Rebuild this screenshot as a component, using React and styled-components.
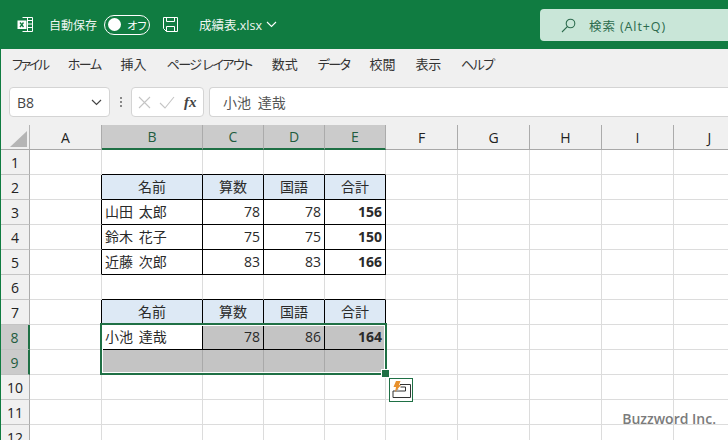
import React from 'react';
import styled, { createGlobalStyle } from 'styled-components';

const GREEN = '#107c41';
const SEL = '#1f7045';
const FONT = '"Open Sans", "Noto Sans CJK JP", sans-serif';

const Global = createGlobalStyle`
  html, body { margin: 0; padding: 0; background: #fff; }
  body { font-family: ${FONT}; }
`;

const Page = styled.div`
  width: 728px; height: 440px; overflow: hidden; position: relative;
  display: flex; flex-direction: column; background: #fff;
`;
const TitleBar = styled.header`
  height: 49px; flex: none; background: ${GREEN}; color: #fff;
  display: flex; align-items: center; font-size: 12px; padding-left: 17px;
`;
const Logo = styled.svg`width: 17px; height: 17px; margin-right: 15px; flex: none;`;
const AutoSave = styled.span`width: 48px; white-space: nowrap; color: #eef6f1;`;
const Toggle = styled.div`
  margin-left: 7px; width: 46px; height: 20px; box-sizing: border-box; border: 1px solid #fff; border-radius: 10px;
  display: flex; align-items: center; padding-left: 3px; gap: 6px; font-size: 11px; white-space: nowrap; letter-spacing: -1.5px;
`;
const Knob = styled.i`width: 13px; height: 13px; border-radius: 50%; background: #fff; flex: none;`;
const SaveIcon = styled.svg`width: 17px; height: 17px; margin-left: 12px; flex: none;`;
const FileName = styled.span`margin-left: 20px; font-size: 12.5px; display: flex; align-items: center; gap: 4px; color: #eef6f1; white-space: nowrap;`;
const SearchBox = styled.div`
  margin-left: auto; width: 188px; height: 32px; margin-top: 1px; background: #c9e6d8; border-radius: 4px 0 0 4px;
  display: flex; align-items: center; padding-left: 21px; box-sizing: border-box; color: #2c6b4d; font-size: 12.5px; gap: 13px; letter-spacing: 0.9px;
`;
const Tabs = styled.nav`
  height: 38px; flex: none; box-sizing: border-box; border-left: 1px solid ${GREEN}; background: #f0f0f0; padding: 0 0 9px 11px;
  display: flex; align-items: center; gap: 20px; font-size: 13px; color: #333; font-feature-settings: 'palt';
`;
const Tab = styled.span`
  white-space: nowrap;
  letter-spacing: ${p => p.$spacing}px;
`;
const FormulaBar = styled.div`
  height: 38px; flex: none; box-sizing: border-box; border-left: 1px solid ${GREEN}; background: #f0f0f0; padding: 0 0 8px 8px;
  display: flex; align-items: stretch;
`;
const NameBox = styled.div`
  width: 101px; box-sizing: border-box; background: #fff; border: 1px solid #d4d4d4; border-radius: 4px;
  display: flex; align-items: center; justify-content: space-between; padding: 0 7px; font-size: 14px; color: #444;
`;
const Dots = styled.div`
  width: 21px; flex: none; display: flex; flex-direction: column; align-items: center; justify-content: center; gap: 2px;
`;
const Dot = styled.i`width: 2px; height: 2px; background: #888;`;
const FnBox = styled.div`
  width: 73px; box-sizing: border-box; background: #fff; border: 1px solid #d4d4d4; border-radius: 4px;
  display: flex; align-items: center; padding-left: 6px; gap: 8px;
`;
const Fx = styled.span`font-family: "Liberation Serif", serif; font-style: italic; font-weight: 700; font-size: 15px; color: #444; margin-left: 1px;`;
const Input = styled.div`
  flex: 1; margin-left: 5px; box-sizing: border-box; background: #fff; border: 1px solid #d4d4d4; border-right: 0; border-radius: 4px 0 0 4px;
  display: flex; align-items: center; padding-left: 13px; font-size: 14px; color: #555; word-spacing: 3px;
`;
const SheetWrap = styled.div`
  flex: 1; min-height: 0; border-left: 1px solid ${GREEN}; position: relative; overflow: hidden;
`;
const Sheet = styled.div`
  display: grid;
  grid-template-columns: 29px 72px 101px 61px 61px 61px 72px 72px 72px 72px 72px;
  grid-auto-rows: 25px;
  color: #2a2a2a; font-size: 14px;
`;
const Corner = styled.div`
  background: #f0f0f0; border-right: 1px solid #b4b4b4; border-bottom: 1px solid #a8a8a8; box-sizing: border-box;
  display: flex; align-items: flex-end; justify-content: flex-end; padding: 0 2px 2px 0;
`;
const ColHead = styled.div`
  box-sizing: border-box; display: flex; align-items: center; justify-content: center; font-size: 14px;
  background: ${p => (p.$on ? '#cbcbcb' : '#f0f0f0')};
  color: ${p => (p.$on ? '#1f5c3e' : '#222')};
  border-right: 1px solid #ababab;
  border-bottom: ${p => (p.$on ? `2px solid ${SEL}` : '1px solid #a8a8a8')};
`;
const RowHead = styled.div`
  box-sizing: border-box; display: flex; align-items: center; justify-content: center; font-size: 14px;
  background: ${p => (p.$on ? '#cbcbcb' : '#f0f0f0')};
  color: ${p => (p.$on ? '#1f5c3e' : '#222')};
  border-right: ${p => (p.$on ? `2px solid ${SEL}` : '1px solid #ababab')};
  border-bottom: 1px solid #c4c4c4;
`;
const Cell = styled.div`
  box-sizing: border-box; display: flex; align-items: center; white-space: nowrap; overflow: hidden; padding: 0 3px 2px;
  word-spacing: 2px;
  border-right: 1px solid ${p => p.$r || '#dcdcdc'};
  border-bottom: 1px solid ${p => p.$b || '#dcdcdc'};
  background: ${p => p.$bg || '#fff'};
  justify-content: ${p => p.$align || 'flex-start'};
  font-weight: ${p => (p.$bold ? 700 : 400)};
`;
const Selection = styled.div`
  position: absolute; left: 99px; top: 198px; width: 287px; height: 52px; box-sizing: border-box;
  border: 2px solid ${SEL}; box-shadow: inset 0 0 0 1px #fff; pointer-events: none;
`;
const Handle = styled.div`
  position: absolute; left: 381px; top: 245px; width: 7px; height: 7px; box-sizing: border-box;
  background: ${SEL}; box-shadow: 0 0 0 1px #fff;
`;
const PasteBtn = styled.div`
  position: absolute; left: 388px; top: 253px; width: 24px; height: 24px; box-sizing: border-box;
  border: 1px solid ${SEL}; background: #fff; display: flex; align-items: center; justify-content: center;
`;
const Mark = styled.div`
  position: absolute; right: 12px; bottom: 12px; font-size: 14px; font-weight: 600; color: #7b7b7b; white-space: nowrap;
`;

const cols = ['A', 'B', 'C', 'D', 'E', 'F', 'G', 'H', 'I', 'J'];
const rows = {
  2: { b: '名前', c: '算数', d: '国語', e: '合計', head: true },
  3: { b: '山田 太郎', c: 78, d: 78, e: 156 },
  4: { b: '鈴木 花子', c: 75, d: 75, e: 150 },
  5: { b: '近藤 次郎', c: 83, d: 83, e: 166 },
  7: { b: '名前', c: '算数', d: '国語', e: '合計', head: true },
  8: { b: '小池 達哉', c: 78, d: 86, e: 164 },
};
const tabs = [
  ['ファイル', -2.3], ['ホーム', -1.5], ['挿入', 0], ['ページ レイアウト', -1.5], ['数式', 0],
  ['データ', -1.5], ['校閲', 0], ['表示', -0.3], ['ヘルプ', -1.5],
];

function cellProps(r, ci) {
  const inTable = ci >= 1 && ci <= 4;
  const isTop = [2, 3, 4, 5, 7, 8].includes(r);
  const black = '#000';
  const p = {};
  if (inTable && isTop) { p.$r = black; p.$b = black; }
  if (inTable && r === 1) p.$b = black;
  if (inTable && r === 6) p.$b = black;
  if (ci === 0 && isTop) p.$r = black;
  if (ci === 0 && r === 9) p.$r = '#fff';
  if (inTable && rows[r]?.head) { p.$bg = '#dde9f5'; p.$align = 'center'; }
  if (r === 8 && ci >= 2 && ci <= 4) p.$bg = '#c4c4c4';
  if (r === 9 && inTable) { p.$bg = '#c4c4c4'; p.$r = '#a9a9a9'; p.$b = '#c4c4c4'; }
  return p;
}

const Body = () => {
  const out = [];
  for (let r = 1; r <= 12; r++) {
    out.push(<RowHead key={`h${r}`} $on={r === 8 || r === 9}>{r}</RowHead>);
    cols.forEach((c, ci) => {
      const row = rows[r];
      const key = c.toLowerCase();
      const v = row ? row[key] : undefined;
      const props = cellProps(r, ci);
      if (row && !row.head && ci >= 2 && ci <= 4) props.$align = 'flex-end';
      if (row && !row.head && ci === 4) props.$bold = true;
      out.push(<Cell key={`${c}${r}`} {...props}>{v}</Cell>);
    });
  }
  return out;
};

export default function App() {
  return (
    <Page>
      <Global />
      <TitleBar>
        <Logo viewBox="0 0 17 17" fill="none" stroke="#fff" strokeWidth="1">
          <path d="M5.5 1.5h10v14h-10M10.5 1.5v14M10.5 4.5h5M10.5 8h5M10.5 11.5h5" />
          <rect x="0.5" y="4.5" width="9" height="8.5" fill="#fff" stroke="none" />
          <path d="M3 6.5l3.5 4.5M6.5 6.5L3 11" stroke="#107c41" strokeWidth="1.3" />
        </Logo>
        <AutoSave>自動保存</AutoSave>
        <Toggle><Knob /><span>オフ</span></Toggle>
        <SaveIcon viewBox="0 0 17 17" fill="none" stroke="#fff" strokeWidth="1">
          <path d="M1.5 1.5h14v14h-11l-3-3zM4.5 1.5v4h8v-4M4.5 15.5v-5h8v5" />
        </SaveIcon>
        <FileName>
          成績表.xlsx
          <svg width="11" height="7" viewBox="0 0 11 7" fill="none" stroke="#fff" strokeWidth="1.1"><path d="M1 1l4.5 4.5L10 1" /></svg>
        </FileName>
        <SearchBox>
          <svg width="15" height="15" viewBox="0 0 15 15" fill="none" stroke="#2c6b4d" strokeWidth="1.1">
            <circle cx="9.5" cy="5.5" r="4.3" /><path d="M6.3 8.7L1 14" />
          </svg>
          <span>検索 (Alt+Q)</span>
        </SearchBox>
      </TitleBar>
      <Tabs>
        {tabs.map(([t, spacing]) => <Tab key={t} $spacing={spacing}>{t}</Tab>)}
      </Tabs>
      <FormulaBar>
        <NameBox>
          B8
          <svg width="11" height="7" viewBox="0 0 11 7" fill="none" stroke="#444" strokeWidth="1.2"><path d="M1 1l4.5 4.5L10 1" /></svg>
        </NameBox>
        <Dots><Dot /><Dot /><Dot /></Dots>
        <FnBox>
          <svg width="13" height="13" viewBox="0 0 13 13" fill="none" stroke="#c4c4c4" strokeWidth="1.1"><path d="M1 1l11 11M12 1L1 12" /></svg>
          <svg width="16" height="13" viewBox="0 0 16 13" fill="none" stroke="#c4c4c4" strokeWidth="1.1"><path d="M1 7l5 5L15 1" /></svg>
          <Fx>fx</Fx>
        </FnBox>
        <Input>小池 達哉</Input>
      </FormulaBar>
      <SheetWrap>
        <Sheet>
          <Corner>
            <svg width="17" height="16" viewBox="0 0 17 16"><path d="M17 0v16H0z" fill="#b5b5b5" /></svg>
          </Corner>
          {cols.map((c, i) => <ColHead key={c} $on={i >= 1 && i <= 4}>{c}</ColHead>)}
          <Body />
        </Sheet>
        <Selection />
        <Handle />
        <PasteBtn>
          <svg width="22" height="22" viewBox="0 0 22 22" fill="none">
            <path d="M10 5.5h10.5v13h-17.5v-6.5h12.5v-4h-5" stroke="#333" strokeWidth="1" />
            <path d="M7 9.5l3 2.5H7z" fill="#aaa" />
            <path d="M6 2h4.5L9 6h2L5 13l1-5H3.5z" fill="#e8912d" />
          </svg>
        </PasteBtn>
        <Mark>Buzzword Inc.</Mark>
      </SheetWrap>
    </Page>
  );
}
